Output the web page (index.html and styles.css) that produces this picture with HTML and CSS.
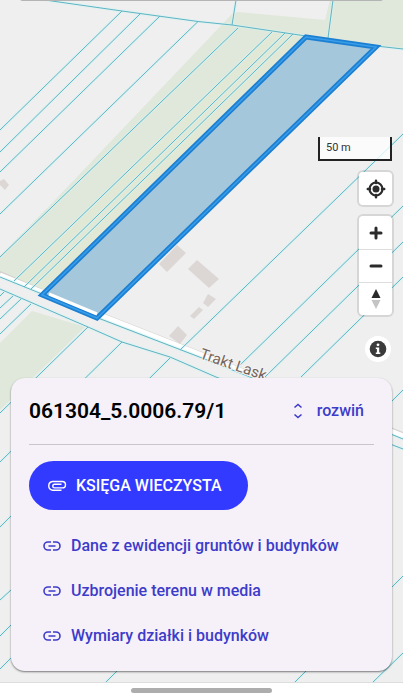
FILE: index.html
```html
<!DOCTYPE html>
<html lang="pl">
<head>
<meta charset="utf-8">
<meta name="viewport" content="width=device-width, initial-scale=1">
<title>Działka 061304_5.0006.79/1</title>
<link rel="stylesheet" href="styles.css">
</head>
<body>
<main class="map-view">
  <svg class="map" viewBox="0 0 403 683" preserveAspectRatio="xMidYMin slice" aria-hidden="true">
    <!-- meadows -->
    <path class="meadow" d="M232 14L238 12L325 20L330 0H403V49L378 46L306 36L42 293L0 273V256L55 200Z"/>
    <path class="meadow" d="M32 311L85 327L0 410V343Z"/>
    <path class="verge" d="M272 32L306 36L42 293L14 281Z"/>
    <!-- road -->
    <path class="road-edge" d="M0 272L42 290M100 313L202 353L262 377L403 433"/>
    <path class="road" d="M0 275L42 292M100 315L202 355L262 379L403 436"/>
    <!-- buildings -->
    <g class="buildings">
      <path d="M177 245L186 253L167 272L159 264Z"/>
      <path d="M197 260L219 279L209 288L188 269Z"/>
      <path d="M208 294L216 299L208 307L203 303Z"/>
      <path d="M199 307L203 310L194 319L190 316Z"/>
      <path d="M178 326L187 335L180 344L169 336Z"/>
      <path d="M4 179L9 185L5 190L0 185V181Z"/>
    </g>
    <!-- parcel boundaries: a pale glow under a thin line -->
    <defs>
      <path id="bounds" d="M45 0L122 11L198 21.500L232 25L306 36M376 46L403 49M236 0L232 25M333 0L328 38
        M122 11L0 130M140 14L0 152M160 16L0 172M198 21.500L0 214M238 28L0 257M272 32L14 281M285 33L24 287M293 34L31 289
        M0 277L42 294M98 318L202 358L245 375L403 439M0 289L88 327L122 342L170 357L216 377L403 449
        M4 292L0 296M13 296L0 308M21 299L0 319M31 304L0 334M88 327L0 413M122 342L0 462M170 358L0 527
        M11 590L0 600M11 625L0 636M14 655L0 669M117 671L105 683M306 671L294 683M403 653L372 683M403 576L391 588
        M403 134L180 350M403 206L238 367M403 242L265 377M403 277L301 377M403 390L391 402"/>
    </defs>
    <use href="#bounds" class="glow"/>
    <use href="#bounds" class="line"/>
    <!-- selected parcel -->
    <path class="parcel" d="M306 37L376 47L97 318L42 295Z"/>
    <path class="road-inside" d="M49 294L97 314"/>
    <path class="parcel-core" d="M306 37L376 47L97 318L42 295Z"/>
    <text class="street" transform="translate(199 358) rotate(19)">Trakt Lask</text>
  </svg>

  <div class="top-edge"></div>

  <div class="controls">
    <div class="scale">50 m</div>
    <div class="control-group">
      <button class="control" type="button" aria-label="Moja lokalizacja">
        <svg width="20" height="20" viewBox="0 0 20 20"><circle cx="10" cy="10" r="6.500" fill="none" stroke="#2b2b2b" stroke-width="2.200"/><circle cx="10" cy="10" r="3.500" fill="#2b2b2b"/><path d="M10 1.800V4M10 16V18.200M1.800 10H4M16 10H18.200" stroke="#2b2b2b" stroke-width="2.500" stroke-linecap="round"/></svg>
      </button>
    </div>
    <div class="control-group">
      <button class="control" type="button" aria-label="Przybliż">
        <svg width="20" height="20" viewBox="0 0 20 20"><path d="M10 5V15M5 10H15" stroke="#2b2b2b" stroke-width="3" stroke-linecap="round"/></svg>
      </button>
      <button class="control" type="button" aria-label="Oddal">
        <svg width="20" height="20" viewBox="0 0 20 20"><path d="M5 10H15" stroke="#2b2b2b" stroke-width="3" stroke-linecap="round"/></svg>
      </button>
      <button class="control" type="button" aria-label="Północ">
        <svg width="20" height="20" viewBox="0 0 20 20"><path d="M10 0L14.500 9H5.500Z" fill="#2b2b2b"/><path d="M10 20L14.500 11H5.500Z" fill="#c4c4c4"/></svg>
      </button>
    </div>
    <button class="info" type="button" aria-label="Informacje o mapie">
      <svg width="18" height="18" viewBox="0 0 18 18"><circle cx="9" cy="9" r="8.300" fill="#3b3b3b"/><circle cx="9" cy="4.800" r="1.400" fill="#fff"/><path d="M6.800 7.500H10.200V12.500H11.300V14H6.800V12.500H7.900V9H6.800Z" fill="#fff"/></svg>
    </button>
  </div>

  <section class="card">
    <header class="card-head">
      <h1 class="title">061304_5.0006.79/1</h1>
      <button class="expand" type="button">
        <svg width="10" height="16" viewBox="0 0 10 16"><path d="M1.500 4.500L5 1.500L8.500 4.500M1.500 11.500L5 14.500L8.500 11.500" fill="none" stroke="currentColor" stroke-width="1.600"/></svg>
        rozwiń
      </button>
    </header>
    <a class="primary" href="#ksiega">
      <svg width="20" height="12" viewBox="0 0 20 12"><path d="M14.500 10.200H5.500A4.400 4.400 0 0 1 5.500 1.500H15.300A3.200 3.200 0 0 1 15.300 7.900H7.200A1.900 1.900 0 0 1 7.200 4.200H14.500" fill="none" stroke="currentColor" stroke-width="1.400"/></svg>
      KSIĘGA WIECZYSTA
    </a>
    <nav class="links">
      <a class="link" href="#ewidencja"><svg width="18" height="10" viewBox="0 0 18 10"><path d="M8 1H5A4 4 0 0 0 5 9H8M10 1H13A4 4 0 0 1 13 9H10M5.500 5H12.500" fill="none" stroke="currentColor" stroke-width="1.600"/></svg>Dane z ewidencji gruntów i budynków</a>
      <a class="link" href="#uzbrojenie"><svg width="18" height="10" viewBox="0 0 18 10"><path d="M8 1H5A4 4 0 0 0 5 9H8M10 1H13A4 4 0 0 1 13 9H10M5.500 5H12.500" fill="none" stroke="currentColor" stroke-width="1.600"/></svg>Uzbrojenie terenu w media</a>
      <a class="link" href="#wymiary"><svg width="18" height="10" viewBox="0 0 18 10"><path d="M8 1H5A4 4 0 0 0 5 9H8M10 1H13A4 4 0 0 1 13 9H10M5.500 5H12.500" fill="none" stroke="currentColor" stroke-width="1.600"/></svg>Wymiary działki i budynków</a>
    </nav>
  </section>
</main>
<footer class="system-bar"><div class="handle"></div></footer>
</body>
</html>
```
FILE: styles.css
```css
* {
  box-sizing: border-box;
}

body {
  display: flex;
  flex-direction: column;
  min-height: 100vh;
  margin: 0;
  background: #fff;
  font-family: Roboto, "Liberation Sans", sans-serif;
}

button {
  padding: 0;
  border: 0;
  background: none;
  font: inherit;
  color: inherit;
}

.map-view {
  position: relative;
  display: flex;
  flex: 1;
  flex-direction: column;
  justify-content: space-between;
  padding: 0 11px 11px;
  overflow: hidden;
  background: #efefef;
}

.map {
  position: absolute;
  inset: 0;
  width: 100%;
  height: 100%;
}

.meadow {
  fill: #dfe8da;
}

.verge {
  fill: #e1e9d6;
}

.road {
  fill: none;
  stroke: #fff;
  stroke-width: 5;
}

.road-inside {
  fill: none;
  stroke: #fff;
  stroke-width: 3;
}

.road-edge {
  fill: none;
  stroke: #d4d2ce;
  stroke-width: 2;
}

.buildings {
  fill: #dcd7d4;
}

.glow {
  fill: none;
  stroke: #d5f2f2;
  stroke-opacity: 0.6;
  stroke-width: 3;
}

.line {
  fill: none;
  stroke: #5fb4c3;
  stroke-width: 1;
}

.parcel {
  fill: #1e80b8;
  fill-opacity: 0.36;
  stroke: #1c7fd2;
  stroke-width: 5;
}

.parcel-core {
  fill: none;
  stroke: #399eea;
  stroke-width: 1.5;
}

.street {
  fill: #75655c;
  stroke: #f6f4f2;
  stroke-width: 2;
  paint-order: stroke;
  font-size: 15px;
}

.top-edge {
  position: absolute;
  top: -4px;
  left: 20px;
  right: 20px;
  height: 5px;
  border-radius: 4px;
  background: #b4b4b4;
}

.controls {
  position: relative;
  display: flex;
  flex-direction: column;
  align-items: flex-end;
  gap: 11px;
  padding-top: 137px;
}

.scale {
  width: 74px;
  height: 24px;
  padding-left: 6px;
  border: 2px solid #222;
  border-top: 0;
  background: rgba(255, 255, 255, 0.75);
  color: #333;
  font-size: 11px;
  line-height: 22px;
}

.control-group {
  display: flex;
  flex-direction: column;
  width: 33px;
  border-radius: 4px;
  background: #fff;
  box-shadow: 0 0 0 2px rgba(0, 0, 0, 0.1);
}

.control {
  display: grid;
  place-items: center;
  height: 33px;
}

.control + .control {
  border-top: 1px solid #ddd;
}

.info {
  display: grid;
  place-items: center;
  width: 26px;
  height: 26px;
  margin: 10px 1px 0 0;
  border-radius: 50%;
  background: #fff;
}

.card {
  position: relative;
  padding: 11px 18px 13px;
  border-radius: 14px;
  background: #f6f1f9;
  box-shadow: 0 1px 2px rgba(0, 0, 0, 0.5);
}

.card-head {
  display: flex;
  align-items: center;
  justify-content: space-between;
  height: 56px;
  padding: 0 10px 12px 0;
  margin-bottom: 16px;
  border-bottom: 1px solid #c9c5cc;
}

.title {
  margin: 0;
  color: #000;
  font-size: 21px;
  font-weight: 600;
  line-height: 24px;
}

.expand {
  display: flex;
  align-items: center;
  gap: 14px;
  color: #3d3cc9;
  font-size: 16px;
  font-weight: 500;
}

.primary {
  display: inline-flex;
  align-items: center;
  gap: 9px;
  height: 49px;
  padding: 0 26px 0 18px;
  border-radius: 25px;
  background: #333aff;
  color: #fff;
  font-size: 16px;
  font-weight: 500;
  text-decoration: none;
}

.links {
  display: flex;
  flex-direction: column;
  padding: 13px 0 0 14px;
}

.link {
  display: flex;
  align-items: center;
  gap: 10px;
  height: 45px;
  color: #3d3cc9;
  font-size: 16px;
  font-weight: 500;
  text-decoration: none;
}

.system-bar {
  display: flex;
  justify-content: center;
  padding: 5px 0 6px;
  border-top: 1px solid #ddd;
  background: #fff;
}

.handle {
  width: 35%;
  height: 5px;
  border-radius: 3px;
  background: #adadad;
}
```
